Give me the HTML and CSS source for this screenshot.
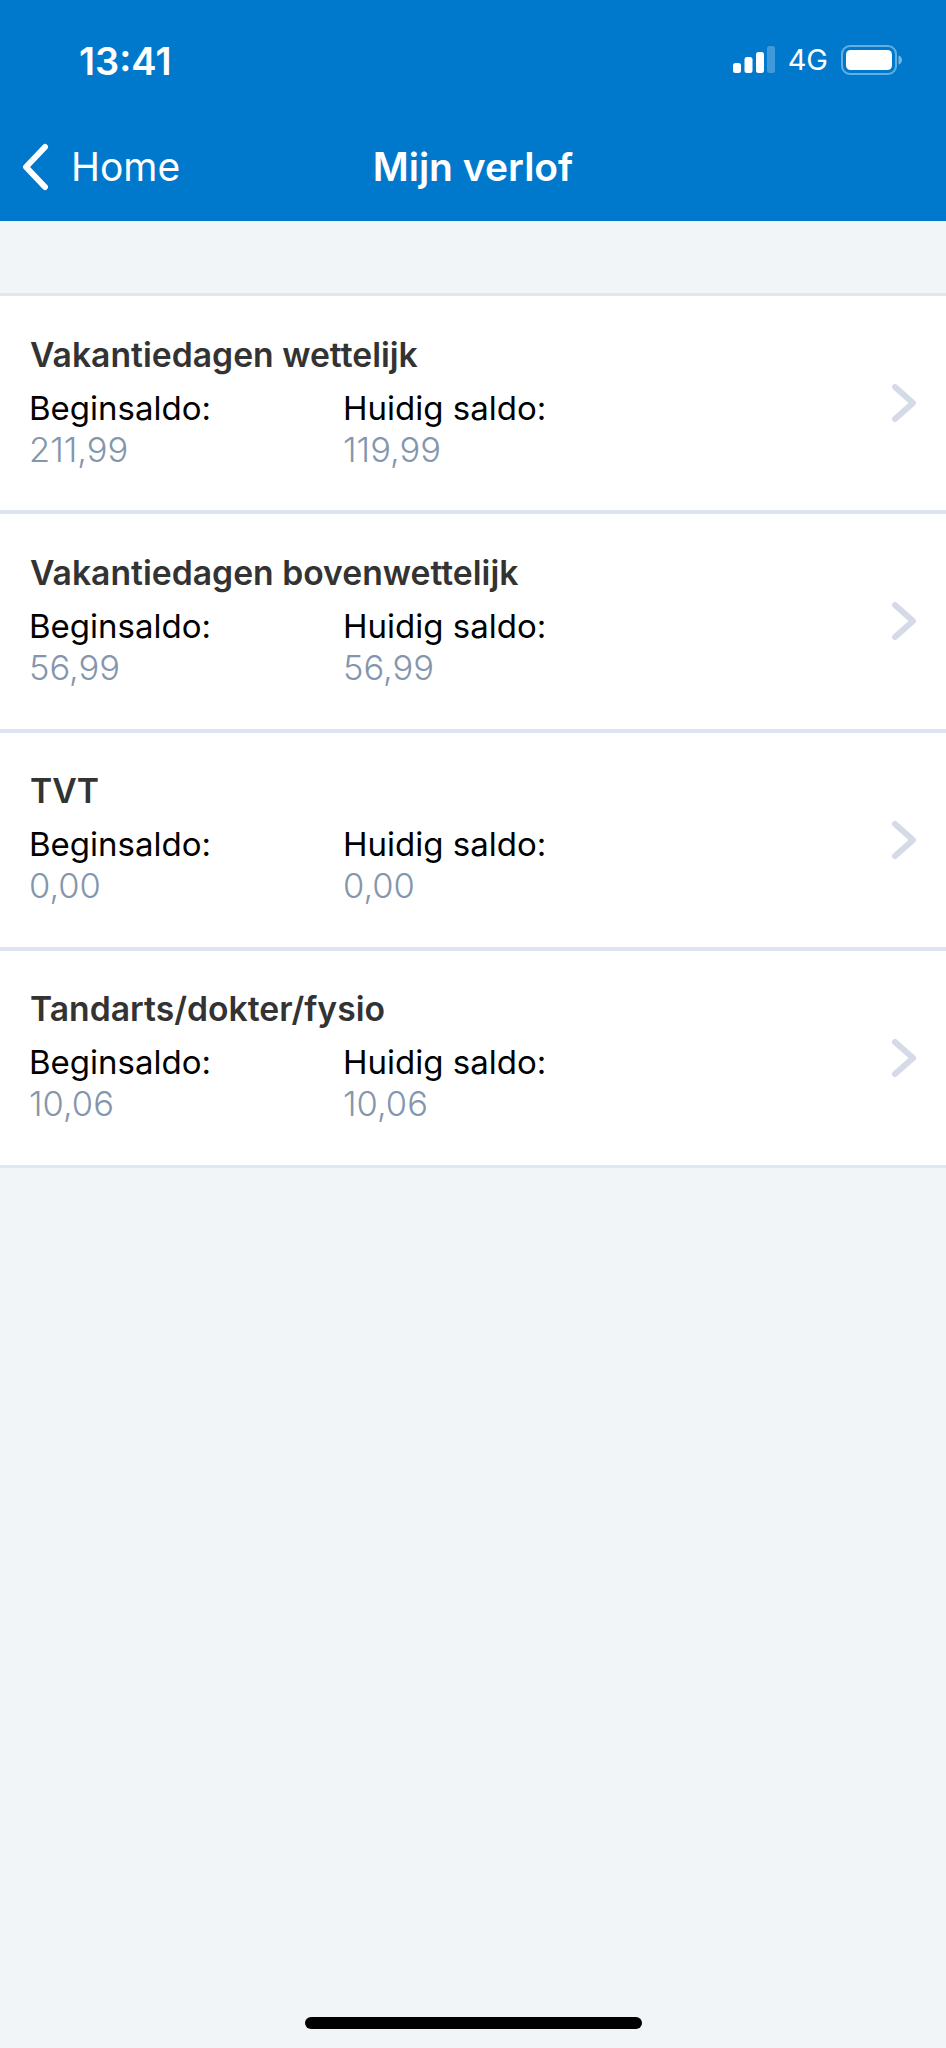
FILE: index.html
```html
<!DOCTYPE html>
<html lang="nl">
<head>
<meta charset="utf-8">
<title>Mijn verlof</title>
<link rel="stylesheet" href="styles.css">
</head>
<body>
<div class="screen">
  <header class="header">
    <div class="status">
      <span class="time">13:41</span>
      <div class="status-right">
        <svg class="signal" width="42" height="27" viewBox="0 0 42 27">
          <rect x="0" y="17" width="8" height="10" rx="2.5" fill="#fff"/>
          <rect x="11.5" y="11" width="8" height="16" rx="2.5" fill="#fff"/>
          <rect x="23" y="6" width="8" height="21" rx="2.5" fill="#fff"/>
          <rect x="34" y="0" width="8" height="27" rx="2.5" fill="#fff" fill-opacity=".25"/>
        </svg>
        <span class="net">4G</span>
        <svg class="battery" width="61" height="30" viewBox="0 0 61 30">
          <rect x="1" y="1" width="54" height="28" rx="8" fill="none" stroke="#fff" stroke-opacity=".4" stroke-width="2"/>
          <rect x="5" y="5" width="46" height="20" rx="4.5" fill="#fff"/>
          <path d="M57.500 10.500c2 .5 3.500 2.200 3.500 4.500s-1.500 4-3.500 4.500z" fill="#fff" fill-opacity=".45"/>
        </svg>
      </div>
    </div>
    <nav class="nav">
      <a class="back">
        <svg class="back-icon" width="30" height="48" viewBox="0 0 30 48">
          <path d="M25 4 6 24l19 20" fill="none" stroke="#fff" stroke-width="6" stroke-linecap="round" stroke-linejoin="round"/>
        </svg>
        <span>Home</span>
      </a>
      <h1 class="title">Mijn verlof</h1>
    </nav>
  </header>

  <main class="list">
    <section class="row">
      <div class="row-body">
        <h2 class="row-title">Vakantiedagen wettelijk</h2>
        <div class="cols">
          <div><div class="label">Beginsaldo:</div><div class="value">211,99</div></div>
          <div><div class="label">Huidig saldo:</div><div class="value">119,99</div></div>
        </div>
      </div>
      <svg class="chev" width="26" height="40" viewBox="0 0 26 40"><path d="M4 4 22 20 4 36" fill="none" stroke="#d5dbe6" stroke-width="6" stroke-linecap="round" stroke-linejoin="round"/></svg>
    </section>
    <section class="row">
      <div class="row-body">
        <h2 class="row-title">Vakantiedagen bovenwettelijk</h2>
        <div class="cols">
          <div><div class="label">Beginsaldo:</div><div class="value">56,99</div></div>
          <div><div class="label">Huidig saldo:</div><div class="value">56,99</div></div>
        </div>
      </div>
      <svg class="chev" width="26" height="40" viewBox="0 0 26 40"><path d="M4 4 22 20 4 36" fill="none" stroke="#d5dbe6" stroke-width="6" stroke-linecap="round" stroke-linejoin="round"/></svg>
    </section>
    <section class="row">
      <div class="row-body">
        <h2 class="row-title">TVT</h2>
        <div class="cols">
          <div><div class="label">Beginsaldo:</div><div class="value">0,00</div></div>
          <div><div class="label">Huidig saldo:</div><div class="value">0,00</div></div>
        </div>
      </div>
      <svg class="chev" width="26" height="40" viewBox="0 0 26 40"><path d="M4 4 22 20 4 36" fill="none" stroke="#d5dbe6" stroke-width="6" stroke-linecap="round" stroke-linejoin="round"/></svg>
    </section>
    <section class="row">
      <div class="row-body">
        <h2 class="row-title">Tandarts/dokter/fysio</h2>
        <div class="cols">
          <div><div class="label">Beginsaldo:</div><div class="value">10,06</div></div>
          <div><div class="label">Huidig saldo:</div><div class="value">10,06</div></div>
        </div>
      </div>
      <svg class="chev" width="26" height="40" viewBox="0 0 26 40"><path d="M4 4 22 20 4 36" fill="none" stroke="#d5dbe6" stroke-width="6" stroke-linecap="round" stroke-linejoin="round"/></svg>
    </section>
  </main>
  <div class="home-indicator"></div>
</div>
</body>
</html>
```
FILE: styles.css
```css
* { box-sizing: border-box; }
html, body { margin: 0; padding: 0; }
body { background: #f1f5f8; font-family: Inter, "Noto Sans", "Liberation Sans", sans-serif; }
.screen { width: 946px; height: 2048px; display: flex; flex-direction: column; background: #f1f5f8; overflow: hidden; }

.header { height: 221px; background: #0079cc; color: #fff; display: flex; flex-direction: column; }
.status { height: 120px; display: flex; justify-content: space-between; align-items: flex-start; padding: 41px 44px 0 79px; }
.time { font-size: 38px; line-height: 40px; font-weight: 600; }
.status-right { display: flex; align-items: flex-start; margin-top: 4px; }
.signal { margin: 1px 13px 0 0; }
.net { font-size: 29px; line-height: 32px; font-weight: 400; margin: -1px 13px 0 0; }
.battery { display: block; }

.nav { position: relative; height: 101px; display: flex; align-items: flex-start; justify-content: center; }
.back { position: absolute; left: 20px; top: 23px; display: flex; align-items: center; gap: 21px; font-size: 39px; line-height: 48px; font-weight: 400; }
.back-icon { display: block; }
.title { margin: 23px 0 0; font-size: 39px; line-height: 48px; font-weight: 600; }

.list { margin-top: 72px; border-top: 3px solid #dfe7ef; border-bottom: 3px solid #dfe7ef; background: #fff; }
.row { height: 218.330px; padding: 0 29px 0 29px; display: flex; align-items: center; justify-content: space-between; border-bottom: 4px solid #dde3f0; background: #fff; }
.row:last-child { height: 214px; border-bottom: 0; }
.row-body { flex: 1; padding: 0 0 2px 1px; }
.row-title { margin: 0 0 13px; font-size: 33.700px; line-height: 40px; font-weight: 600; color: #333; }
.cols { display: grid; grid-template-columns: 314px 1fr; margin-left: -1px; }
.label { font-size: 33px; line-height: 40px; margin-bottom: 2px; color: #000; }
.value { font-size: 34.500px; line-height: 40px; color: #8496ad; font-weight: 300; }
.chev { display: block; }

.home-indicator { margin: auto auto 0; position: relative; bottom: 19px; width: 337px; height: 12px; border-radius: 6px; background: #000; }
```
